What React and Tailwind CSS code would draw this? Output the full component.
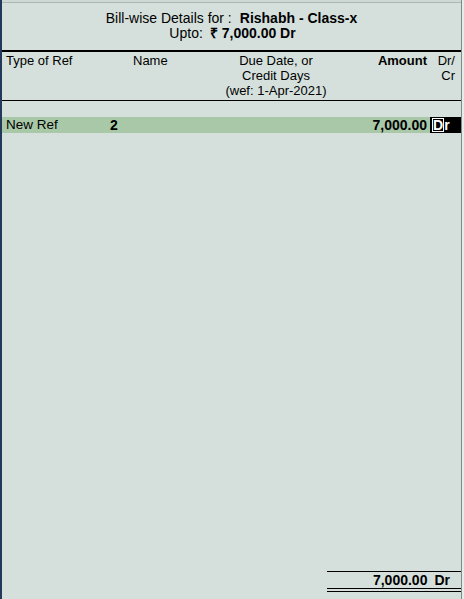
import React from 'react';

const cols = 'grid grid-cols-[104px_104px_132px_85px_34px]';

export default function App() {
  return (
    <div className="flex h-[599px] w-[464px] overflow-hidden bg-[#d5e0dc] font-['Liberation_Sans',Arial,sans-serif] text-[13px] leading-4 text-black">
      {/* left frame edge */}
      <div className="w-[2px] bg-[#24395a]" />

      <div className="flex flex-1 flex-col">
        {/* clipped title strip */}
        <div className="h-[3px] border-b border-[#a9b8b4] bg-[#cfd8d5]" />

        {/* Header */}
        <div className="flex flex-col items-center pt-[8px] pb-[9px] text-[14px] leading-[15px]">
          <div className="flex gap-[8px]">
            <span>Bill-wise Details for :</span>
            <span className="font-bold">Rishabh - Class-x</span>
          </div>
          <div className="flex gap-[7px] pl-[2px]">
            <span>Upto:</span>
            <span className="font-bold">₹ 7,000.00 Dr</span>
          </div>
        </div>
        <div className="h-[2px] bg-black" />

        {/* Column headings */}
        <div className={`${cols} pt-[1px] pb-[2px] leading-[15px]`}>
          <div className="pl-[4px]">Type of Ref</div>
          <div className="pl-[27px]">Name</div>
          <div className="text-center">
            <div>Due Date, or</div>
            <div>Credit Days</div>
            <div>(wef: 1-Apr-2021)</div>
          </div>
          <div className="text-right font-bold">Amount</div>
          <div className="text-right pr-[6px]">
            <div>Dr/</div>
            <div>Cr</div>
          </div>
        </div>
        <div className="h-px bg-black" />

        <div className="h-[16px]" />

        {/* Entry row */}
        <div className={`${cols} h-[16px] items-center bg-[#a9c8a8] text-[14px]`}>
          <div className="pl-[4px] text-[13.5px]">New Ref</div>
          <div className="pl-[4px] font-bold">2</div>
          <div />
          <div className="text-right font-bold">7,000.00</div>
          <div className="ml-[3px] flex h-[16px] items-center bg-black pl-[2px] font-bold text-white">
            <span className="border border-white leading-[12px]">D</span>
            <span>r</span>
          </div>
        </div>

        <div className="flex-1" />

        {/* Total */}
        <div className="ml-[325px] mb-[7px]">
          <div className="h-px bg-black" />
          <div className="flex h-[16px] items-center justify-end gap-[7px] pr-[11px] text-[14px] font-bold">
            <span>7,000.00</span>
            <span>Dr</span>
          </div>
          <div className="h-px bg-black" />
          <div className="h-[2px]" />
          <div className="h-px bg-black" />
        </div>
      </div>

      {/* right frame edge */}
      <div className="w-px bg-[#7d8a87]" />
      <div className="w-[2px] bg-[#e6ecea]" />
    </div>
  );
}
